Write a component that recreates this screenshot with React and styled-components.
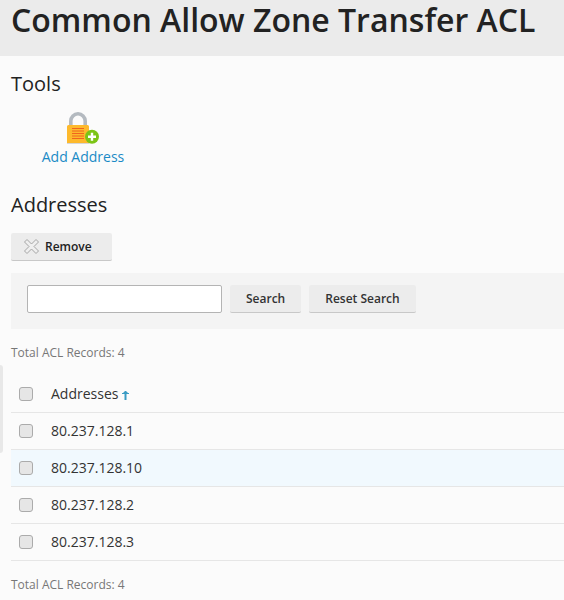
import React from "react";
import styled, { createGlobalStyle } from "styled-components";

const GlobalStyle = createGlobalStyle`
  html, body {
    margin: 0;
    padding: 0;
    height: 600px;
    overflow: hidden;
    background: #fbfbfb;
    font-family: "Open Sans", "Liberation Sans", sans-serif;
    color: #333;
  }
`;

const Page = styled.div`
  position: relative;
  width: 564px;
  height: 600px;
  overflow: hidden;
`;

const Header = styled.header`
  height: 56px;
  background: #ebebeb;
  padding-left: 11px;
`;

const Title = styled.h1`
  margin: 0;
  font-size: 32px;
  line-height: 40px;
  font-weight: 600;
  color: #222;
  white-space: nowrap;
`;

const Content = styled.main`
  padding: 16px 0 0 11px;
`;

const SectionTitle = styled.h2`
  margin: 0;
  font-size: 20px;
  line-height: 24px;
  font-weight: 400;
  color: #222;
`;

const ToolLink = styled.a`
  display: flex;
  flex-direction: column;
  align-items: center;
  width: 144px;
  margin-top: 16px;
  color: #1a8ac6;
  font-size: 14px;
  line-height: 18px;
`;

const ToolIcon = styled.svg`
  display: block;
  width: 34px;
  height: 34px;
  margin-bottom: 2px;
`;

const AddressesTitle = styled(SectionTitle)`
  margin-top: 27px;
`;

const Button = styled.button`
  display: inline-flex;
  align-items: center;
  height: 28px;
  padding: 0 16px;
  border: 0;
  border-bottom: 1px solid #c8c8c8;
  border-radius: 2px;
  background: #ececec;
  color: #333;
  font-family: inherit;
  font-size: 12px;
  font-weight: 600;
`;

const RemoveButton = styled(Button)`
  display: flex;
  width: 101px;
  margin-top: 16px;
  padding: 0 0 0 13px;
  gap: 6px;
  color: #222;
`;

const SearchBar = styled.form`
  display: flex;
  align-items: flex-start;
  gap: 8px;
  box-sizing: border-box;
  height: 56px;
  margin-top: 12px;
  padding: 12px 0 0 16px;
  background: #f4f4f4;
`;

const SearchInput = styled.input`
  box-sizing: border-box;
  width: 195px;
  height: 28px;
  margin: 0;
  border: 1px solid #b4b4b4;
  border-radius: 2px;
  background: #fff;
`;

const Total = styled.p`
  margin: 16px 0 0;
  font-size: 12px;
  line-height: 16px;
  color: #777;
`;

const Table = styled.div`
  margin-top: 15px;
`;

const Row = styled.div`
  display: flex;
  align-items: center;
  height: 34px;
  padding: 0 0 2px 8px;
  border-bottom: 1px solid #e6e6e6;
  background: ${({ $hover }) => ($hover ? "#f1f9fe" : "transparent")};
  font-size: 14px;
  color: #333;
`;

const Check = styled.span`
  box-sizing: border-box;
  flex: none;
  width: 14px;
  height: 14px;
  margin: 2px 18px 0 0;
  border: 1px solid #ababab;
  border-radius: 3px;
  background: #e6e6e6;
`;

const SortArrow = styled.svg`
  width: 7px;
  height: 9px;
  margin: 5px 0 0 4px;
`;

const SideTab = styled.div`
  position: absolute;
  left: 0;
  top: 365px;
  width: 3px;
  height: 88px;
  background: #e8e8e8;
  border-radius: 0 3px 3px 0;
`;

const LockAddIcon = () => (
  <ToolIcon viewBox="0 0 34 34">
    <path d="M4.800 14V9a7.200 7.200 0 0 1 14.400 0V14" fill="none" stroke="#b4bac0" strokeWidth="3.600" />
    <path d="M1 14.500a1.500 1.500 0 0 1 1.500-1.500h19a1.500 1.500 0 0 1 1.500 1.500V31H1z" fill="#fdb92c" />
    <path d="M1 31h22v1H1z" fill="#d6d6d6" />
    <path d="M6 16.500h12M6 19h12M6 21.500h12M6 24h12M6 26.500h12" stroke="#f0641e" strokeWidth="1" />
    <circle cx="26" cy="24.700" r="7" fill="#7cc416" />
    <path d="M26 20.700v8M22 24.700h8" stroke="#fff" strokeWidth="2.400" />
  </ToolIcon>
);

const RemoveIcon = () => (
  <svg width="15" height="15" viewBox="0 0 15 15">
    <path
      d="M.5 3 3 .5l4.500 4.500L12 .5 14.500 3 10 7.500l4.500 4.500-2.500 2.500L7.500 10 3 14.500.5 12 5 7.500z"
      fill="#efefef"
      stroke="#a4a4a4"
      strokeWidth="1"
    />
  </svg>
);

const addresses = ["80.237.128.1", "80.237.128.10", "80.237.128.2", "80.237.128.3"];

const App = () => (
  <Page>
    <GlobalStyle />
    <Header>
      <Title>Common Allow Zone Transfer ACL</Title>
    </Header>
    <Content>
      <SectionTitle>Tools</SectionTitle>
      <ToolLink>
        <LockAddIcon />
        Add Address
      </ToolLink>
      <AddressesTitle>Addresses</AddressesTitle>
      <RemoveButton type="button">
        <RemoveIcon />
        Remove
      </RemoveButton>
      <SearchBar>
        <SearchInput />
        <Button type="button">Search</Button>
        <Button type="button">Reset Search</Button>
      </SearchBar>
      <Total>Total ACL Records: 4</Total>
      <Table>
        <Row>
          <Check />
          Addresses
          <SortArrow viewBox="0 0 7 9">
            <path d="M2.500 0h2v1h1v1h1.500v1H4.500v6h-2V3H0V2h1.500V1h1z" fill="#3a9cc4" />
          </SortArrow>
        </Row>
        {addresses.map((address, i) => (
          <Row key={address} $hover={i === 1}>
            <Check />
            {address}
          </Row>
        ))}
      </Table>
      <Total>Total ACL Records: 4</Total>
    </Content>
    <SideTab />
  </Page>
);

export default App;
